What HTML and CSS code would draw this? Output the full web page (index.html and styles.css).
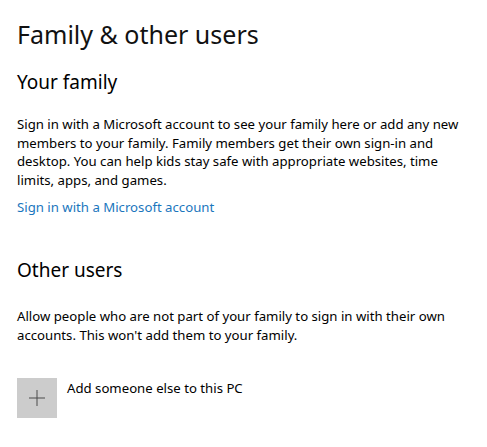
FILE: index.html
```html
<!DOCTYPE html>
<html>
<head>
<meta charset="utf-8">
<link rel="stylesheet" href="styles.css">
</head>
<body>
<main class="page">
  <h1 class="title">Family &amp; other users</h1>
  <section class="section">
    <h2 class="heading">Your family</h2>
    <p class="text">Sign in with a Microsoft account to see your family here or add any new members to your family. Family members get their own sign-in and desktop. You can help kids stay safe with appropriate websites, time limits, apps, and games.</p>
    <a class="link" href="#">Sign in with a Microsoft account</a>
  </section>
  <section class="section other">
    <h2 class="heading">Other users</h2>
    <p class="text text-other">Allow people who are not part of your family to sign in with their own accounts. This won't add them to your family.</p>
    <div class="add-row">
      <div class="tile">
        <svg width="18" height="18" viewBox="0 0 18 18"><path d="M9 1V17M1 9H17" stroke="#4a4a4a" stroke-width="1"/></svg>
      </div>
      <span class="add-label">Add someone else to this PC</span>
    </div>
  </section>
</main>
</body>
</html>
```
FILE: styles.css
```css
html, body { margin: 0; padding: 0; background: #fff; }
body { font-family: "Noto Sans", "Open Sans", sans-serif; color: #000; }
.page { padding: 16px 20px 0 17px; }
.title { margin: 0; font-weight: 400; font-size: 25px; line-height: 36px; color: #111; }
.heading { margin: 0; font-weight: 400; font-size: 19px; line-height: 26px; color: #000; }
.section { display: flex; flex-direction: column; align-items: flex-start; }
.section .heading { margin-top: 17px; }
.text { margin: 20px 0 0; font-size: 13.2px; line-height: 18.6px; max-width: 455px; }
.link { margin-top: 9px; font-size: 13.2px; line-height: 18px; color: #1a76bd; text-decoration: none; }
.other .heading { margin-top: 41px; }
.text-other { margin-top: 24px; }
.add-row { display: flex; gap: 10px; margin-top: 33px; align-items: flex-start; }
.tile { width: 40px; height: 40px; background: #cccccc; display: flex; align-items: center; justify-content: center; }
.add-label { font-size: 13.2px; line-height: 18px; margin-top: 1px; }
```
